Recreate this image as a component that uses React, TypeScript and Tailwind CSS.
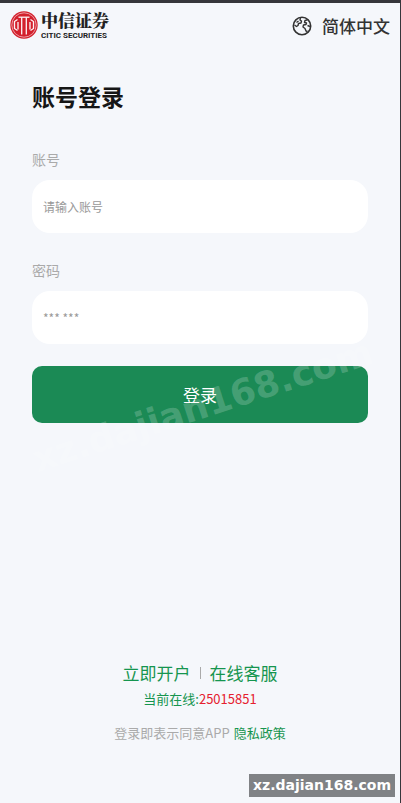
import React, { useState } from 'react';

const CiticMark = () => (
  <svg viewBox="0 0 28 28" className="h-7 w-7 shrink-0" aria-hidden="true">
    <circle cx="14" cy="14" r="13.7" fill="#d3202c" />
    <circle cx="14" cy="14" r="12.2" fill="none" stroke="#f3b9c0" strokeWidth="0.8" />
    <g fill="none" stroke="#fdf3f5" strokeWidth="1.3">
      <path d="M7.5 8.5L4.5 10.5V17.5L7.5 19.5" />
      <path d="M20.5 8.5L23.5 10.5V17.5L20.5 19.5" />
      <path d="M8 11V18.5M20 11V18.5" />
      <path d="M8.5 6.2H19.5" />
      <path d="M11.7 6.2V23.5M16.3 6.2V23.5" />
    </g>
  </svg>
);

const GlobeIcon = () => (
  <svg viewBox="0 0 20 20" className="h-5 w-5" fill="none" stroke="#333" strokeWidth="1.6" strokeLinejoin="round" aria-hidden="true">
    <circle cx="10" cy="10" r="8.7" />
    <path d="M2.5 9L4.5 10.5L6 9.5L6.5 7.5L9 7L9.5 5L8 4L8.5 2" strokeWidth="1.4" />
    <path d="M4.5 6.5L6.5 5" strokeWidth="1.4" />
    <path d="M15.5 3.8L13 4.5L12.5 6.5L14.5 7L14 8.5L11.5 9L11 11L13 12.5L14 15L15.5 15.5" strokeWidth="1.4" />
    <path d="M15.5 9.5L18 10.5" strokeWidth="1.4" />
  </svg>
);

const fieldClass =
  'mt-[11px] block h-[53px] w-full rounded-[18px] bg-white px-[11px] text-xs text-gray-700 outline-none placeholder:text-[#999]';

const App = () => {
  const [account, setAccount] = useState('');
  const [password, setPassword] = useState('');

  return (
    <div className="relative flex min-h-screen flex-col overflow-hidden border-t-3 border-r border-[#36363b] bg-[#f5f7fb] font-['Noto_Sans_CJK_SC',sans-serif]">
      <header className="flex items-center justify-between px-2.5 pt-2">
        <div className="flex items-start gap-[3px]">
          <CiticMark />
          <div className="pt-0.5 text-[#222]">
            <div className="font-['Liberation_Serif','Noto_Serif_CJK_SC','Noto_Sans_CJK_SC',serif] text-[17px] leading-[18px] font-black">中信证券</div>
            <div className="font-['Roboto',sans-serif] text-[8px] leading-[9px] font-bold">CITIC SECURITIES</div>
          </div>
        </div>
        <button type="button" className="flex items-center gap-2.5 text-[17px] font-medium text-[#333]">
          <GlobeIcon />
          简体中文
        </button>
      </header>

      <main className="px-8 pt-10">
        <h1 className="text-[23px] leading-8 font-bold text-[#161616]">账号登录</h1>
        <form onSubmit={(e) => e.preventDefault()}>
          <label htmlFor="account" className="mt-[37px] block text-sm leading-5 text-[#aaa]">账号</label>
          <input
            id="account"
            type="text"
            placeholder="请输入账号"
            value={account}
            onChange={(e) => setAccount(e.target.value)}
            className={fieldClass}
          />
          <label htmlFor="password" className="mt-[27px] block text-sm leading-5 text-[#aaa]">密码</label>
          <input
            id="password"
            type="password"
            placeholder="*** ***"
            value={password}
            onChange={(e) => setPassword(e.target.value)}
            className={fieldClass}
          />
          <button type="submit" className="mt-[22px] h-[57px] w-full rounded-[10px] bg-[#1b8a55] text-[17px] text-white">
            登录
          </button>
        </form>
      </main>

      <footer className="mt-auto flex flex-col items-center pb-[60px]">
        <div className="flex items-center gap-[9px] text-[17px] leading-6 text-[#15954f]">
          <a href="#open">立即开户</a>
          <span className="h-3 w-px bg-[#aaa]" />
          <a href="#service">在线客服</a>
        </div>
        <p className="mt-1 text-[13px] leading-5 text-[#15954f]">
          当前在线:<span className="text-[#e5202f]">25015851</span>
        </p>
        <p className="mt-3.5 flex gap-1 text-[13px] leading-5 text-[#aaa]">
          登录即表示同意APP
          <a href="#privacy" className="text-[#15954f]">隐私政策</a>
        </p>
      </footer>

      {/* Watermarks */}
      <div className="pointer-events-none absolute inset-x-0 top-[383px] flex justify-center pl-1">
        <span className="-rotate-[18deg] font-['DejaVu_Sans',sans-serif] text-[36px] leading-10 font-bold whitespace-nowrap text-white/20">
          xz.dajian168.com
        </span>
      </div>
      <div className="absolute right-[5px] bottom-[6px] bg-[#808285] px-1 font-['DejaVu_Sans',sans-serif] text-[14px] leading-[23px] font-bold text-white">
        xz.dajian168.com
      </div>
    </div>
  );
};

export default App;
